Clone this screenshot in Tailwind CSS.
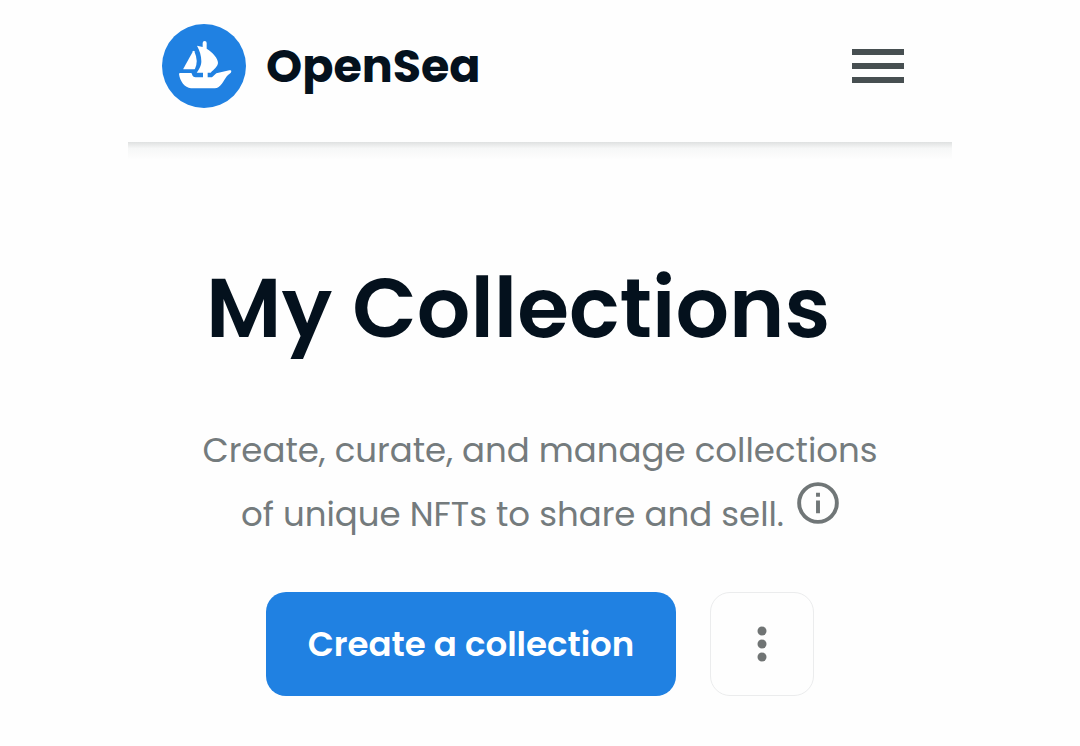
<!DOCTYPE html>
<html lang="en">
<head>
<meta charset="utf-8">
<meta name="viewport" content="width=device-width, initial-scale=1">
<title>My Collections | OpenSea</title>
<script src="https://cdn.jsdelivr.net/npm/@tailwindcss/browser@4"></script>
</head>
<body class="min-h-screen bg-[#fefefe] font-['Poppins','Inter',sans-serif] text-[#04111d]">
<div class="mx-auto max-w-[824px]">
  <header>
    <div class="flex items-center justify-between pt-6 pr-12 pb-[34px] pl-[34px]">
      <a href="#" class="flex items-center gap-5">
        <svg class="size-[84px]" viewBox="35 42 252 252" aria-hidden="true">
          <circle cx="161" cy="168" r="126" fill="#2081e2"/>
          <g fill="#fff">
            <path d="M99 176 L128 124 Q130 121 132 124 Q145 154 134 176 Q133 178 130 178 H101 Q98 178 99 176Z"/>
            <path d="M140 107 L157 111 V99 Q157 93 163 93 Q169 93 169 99 V116 C188 128 203 145 203 159 C201 171 192 177 181 188 H172 V202 H185 L198 190 L237 181 Q243 179 243 184 Q243 189 237 192 C226 198 220 220 205 231 Q200 235 193 235 H122 C103 233 89 214 86 192 Q86 189 90 189 H121 Q125 189 125 193 Q127 202 136 202 H158 V188 H139 C150 174 153 163 153 154 C153 136 148 122 140 107Z"/>
          </g>
        </svg>
        <span class="text-[46px] leading-[60px] font-bold">OpenSea</span>
      </a>
      <button type="button" aria-label="Menu" class="text-[#474f51]">
        <svg class="h-[34px] w-[52px]" viewBox="0 0 52 34" fill="currentColor" aria-hidden="true"><path d="M0 0h52v6H0zM0 14h52v6H0zM0 28h52v6H0z"/></svg>
      </button>
    </div>
    <div class="h-[18px] bg-linear-to-b from-[#dfe1e1] via-[#f6f7f7] via-35% to-[#fefefe]"></div>
  </header>
  <main class="px-20 pt-[84px] pb-12">
    <h1 class="-ml-[2px] text-[84px] leading-[128px] font-semibold whitespace-nowrap">My Collections</h1>
    <p class="-mx-8 mt-[46px] text-center text-[34px] leading-[64px] text-[#747b7d]">
      Create, curate, and manage collections<br>
      of unique NFTs to share and sell.
      <button type="button" aria-label="More information" class="ml-1 inline-block align-top text-[#707677]">
        <svg class="size-[42px]" viewBox="0 0 43 43" aria-hidden="true"><circle cx="21.5" cy="21.5" r="19.3" fill="none" stroke="currentColor" stroke-width="4"/><path d="M19.5 11h4v4h-4zM19.5 19h4v13h-4z" fill="currentColor"/></svg>
      </button>
    </p>
    <div class="mt-[46px] flex justify-center gap-[34px]">
      <button type="button" class="h-[104px] rounded-[20px] bg-[#2081e2] px-[42px] text-[34px] font-semibold whitespace-nowrap text-white">Create a collection</button>
      <button type="button" aria-label="More options" class="flex h-[104px] w-[104px] items-center justify-center rounded-[20px] border border-[#ebeced] text-[#707474]">
        <svg class="h-[36px] w-[10px]" viewBox="0 0 10 36" fill="currentColor" aria-hidden="true"><circle cx="5" cy="5" r="4.5"/><circle cx="5" cy="18" r="4.5"/><circle cx="5" cy="31" r="4.5"/></svg>
      </button>
    </div>
  </main>
</div>
</body>
</html>
